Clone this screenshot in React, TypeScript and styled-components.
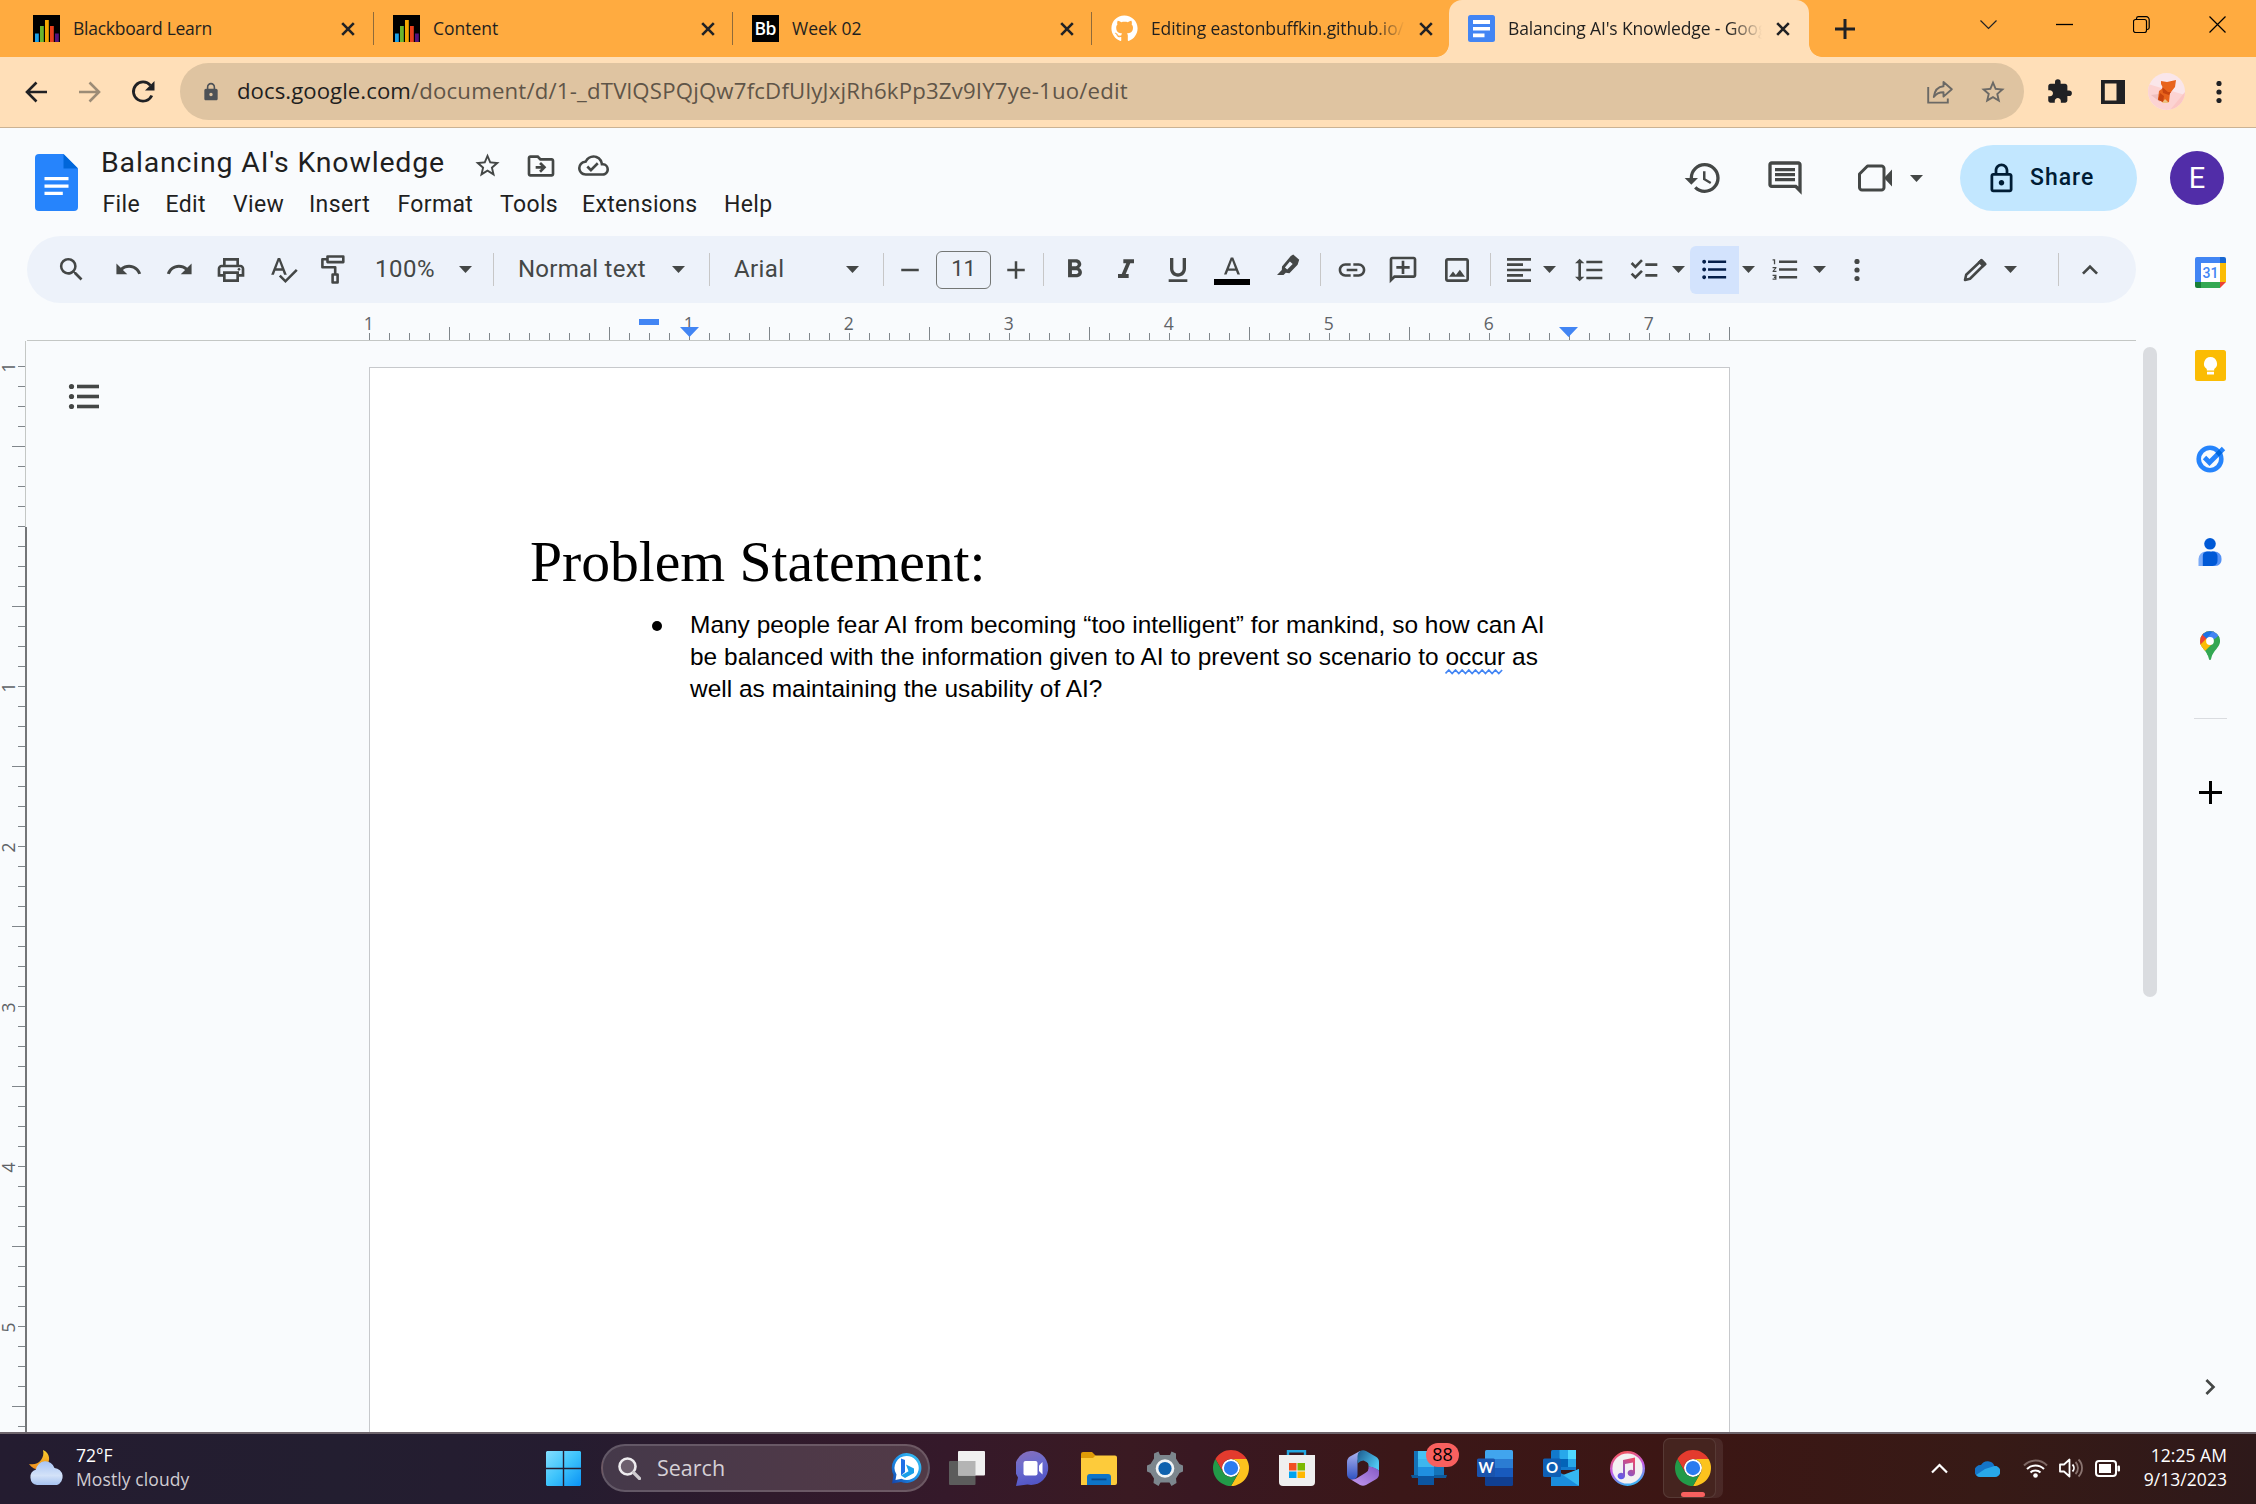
import React from 'react';
import styled, { createGlobalStyle, css } from 'styled-components';
import {
  MdAdd, MdChecklist, MdExtension, MdFormatAlignLeft, MdFormatBold, MdFormatItalic, MdFormatLineSpacing,
  MdFormatListBulleted, MdFormatListNumbered, MdFormatUnderlined, MdHistory, MdKeyboardArrowUp, MdLink, MdLock,
  MdOutlineAddComment, MdOutlineCloudDone, MdOutlineComment, MdOutlineDriveFileMove, MdOutlineImage,
  MdOutlineLock, MdOutlinePrint, MdRedo, MdRemove, MdSearch, MdSpellcheck, MdStarOutline, MdUndo, MdChevronRight,
} from 'react-icons/md';
import { FaGithub } from 'react-icons/fa';

const UI = '"Open Sans", "Noto Sans", sans-serif';
const GOOGLE = 'Roboto, "Open Sans", sans-serif';

const Global = createGlobalStyle`
  * { box-sizing: border-box; }
  html, body { margin: 0; padding: 0; }
  body { width: 2256px; height: 1504px; overflow: hidden; background: #f9fbfd; font-family: ${GOOGLE}; }
  svg { display: block; flex: none; }
`;

const Screen = styled.div`
  width: 2256px;
  height: 1504px;
  display: flex;
  flex-direction: column;
  overflow: hidden;
`;

const Text = styled.span<{ $size: number; $ls?: number; $font?: string; $color?: string; $ml?: number; $weight?: number }>`
  font-family: ${p => p.$font ?? GOOGLE};
  font-size: ${p => p.$size}px;
  font-weight: ${p => p.$weight ?? 400};
  letter-spacing: ${p => p.$ls ?? 0}px;
  color: ${p => p.$color ?? '#1f1f1f'};
  margin-left: ${p => p.$ml ?? 0}px;
  line-height: 1.2;
  white-space: pre;
`;

/* ---------- browser chrome ---------- */
const TabStrip = styled.div`
  height: 57px;
  flex: none;
  display: flex;
  align-items: stretch;
  padding-left: 14px;
  background: #ffab40;
`;

const Tab = styled.div<{ $w: number; $active?: boolean; $last?: boolean }>`
  position: relative;
  width: ${p => p.$w}px;
  display: flex;
  align-items: center;
  padding-left: 19px;
  ${p => !p.$active && !p.$last && css`
    &::after {
      content: '';
      position: absolute;
      right: 0;
      top: 12px;
      width: 1px;
      height: 33px;
      background: #8f6a3a;
    }
  `}
  ${p => p.$active && css`
    background: #ffdfb8;
    border-radius: 13px 13px 0 0;
    &::before, &::after {
      content: '';
      position: absolute;
      bottom: 0;
      width: 13px;
      height: 13px;
    }
    &::before { left: -13px; background: radial-gradient(circle at 0 0, #ffab40 12.5px, #ffdfb8 13.2px); }
    &::after { right: -13px; background: radial-gradient(circle at 100% 0, #ffab40 12.5px, #ffdfb8 13.2px); }
  `}
`;

const TabTitle = styled.div<{ $fade?: boolean }>`
  width: 254px;
  margin-left: 13px;
  padding: 4px 0;
  overflow: hidden;
  display: flex;
  ${p => p.$fade && css`mask-image: linear-gradient(90deg, #000 222px, transparent 254px);`}
`;

const TabClose = styled.div`
  margin-left: 14px;
`;

const NewTab = styled.div`
  margin-left: 26px;
  display: flex;
  align-items: center;
`;

const WindowControls = styled.div`
  margin-left: auto;
  margin-right: 30px;
  display: flex;
  align-items: center;
  gap: 59.5px;
  padding-bottom: 8px;
`;

const AddressRow = styled.div`
  height: 71px;
  flex: none;
  display: flex;
  align-items: center;
  padding: 0 26px 1px 25px;
  background: #ffdfb8;
  border-bottom: 1px solid #cbb293;
`;

const Omnibox = styled.div`
  width: 1844px;
  height: 57px;
  margin-left: 24px;
  border-radius: 29px;
  background: #dfc4a1;
  display: flex;
  align-items: center;
  padding: 0 17px 0 21px;
`;

const Gap = styled.div<{ $w: number }>`
  flex: none;
  width: ${p => p.$w}px;
`;

const Spacer = styled.div`
  flex: 1;
`;

/* ---------- document header ---------- */
const DocHeader = styled.header`
  height: 108px;
  flex: none;
  display: flex;
  align-items: flex-start;
  padding: 17px 32px 0 35px;
  background: #f9fbfd;
`;

const LogoBox = styled.div`
  width: 43px;
  height: 57px;
  margin-top: 9px;
`;

const TitleBlock = styled.div`
  margin-left: 23px;
  display: flex;
  flex-direction: column;
`;

const TitleRow = styled.div`
  height: 41px;
  display: flex;
  align-items: center;
  color: #444746;
`;

const DocTitle = styled.div`
  padding-bottom: 4px;
  display: flex;
`;

const MenuRow = styled.nav`
  height: 34px;
  margin-top: 2px;
  display: flex;
  align-items: center;
  padding-left: 1.500px;
`;

const MenuItem = styled.div<{ $w: number }>`
  width: ${p => p.$w}px;
  display: flex;
`;

const HeaderActions = styled.div`
  margin-left: auto;
  height: 66px;
  display: flex;
  align-items: center;
  color: #444746;
`;

const ShareButton = styled.div`
  width: 177px;
  height: 66px;
  border-radius: 33px;
  margin-left: 37px;
  padding-left: 25px;
  background: #c2e7ff;
  color: #001d35;
  display: flex;
  align-items: center;
`;

const Avatar = styled.div`
  width: 54px;
  height: 54px;
  margin-left: 33px;
  border-radius: 50%;
  background: #512da8;
  display: flex;
  align-items: center;
  justify-content: center;
`;

/* ---------- editor ---------- */
const Editor = styled.div`
  flex: 1;
  min-height: 0;
  display: flex;
  background: #f9fbfd;
`;

const EditorMain = styled.div`
  width: 2164px;
  display: flex;
  flex-direction: column;
`;

const Toolbar = styled.div`
  height: 67px;
  width: 2109px;
  flex: none;
  margin-left: 27px;
  border-radius: 33.5px;
  background: #edf2fa;
  display: flex;
  align-items: center;
  padding-left: 24px;
  color: #444746;
`;

const Tool = styled.div<{ $ml?: number; $w?: number; $on?: boolean; $lift?: number }>`
  flex: none;
  width: ${p => p.$w ?? 40}px;
  height: 48px;
  margin-left: ${p => p.$ml ?? 0}px;
  padding-bottom: ${p => p.$lift ?? 0}px;
  display: flex;
  align-items: center;
  justify-content: center;
  ${p => p.$on && css`background: #d3e3fd; color: #041e49; border-radius: 6px 0 0 6px;`}
`;

const ToolLabel = styled.div<{ $ml: number; $w: number }>`
  flex: none;
  width: ${p => p.$w}px;
  margin-left: ${p => p.$ml}px;
  display: flex;
`;

const Divider = styled.div<{ $ml: number }>`
  flex: none;
  width: 1px;
  height: 33px;
  margin-left: ${p => p.$ml}px;
  background: #c7c7c7;
`;

const SizeBox = styled.div`
  flex: none;
  width: 55px;
  height: 38px;
  margin-left: 6px;
  border: 1.5px solid #747775;
  border-radius: 6px;
  display: flex;
  align-items: center;
  justify-content: center;
`;

const ColorTool = styled.div`
  flex: none;
  width: 36px;
  margin-left: 16px;
  margin-right: 2px;
  height: 28px;
  margin-top: 3px;
  display: flex;
  flex-direction: column;
  align-items: center;
  justify-content: space-between;
  border-bottom: 6px solid #000;
`;

const Mirrored = styled.div`
  transform: scaleX(-1);
`;

const Workspace = styled.div`
  flex: 1;
  min-height: 0;
  display: flex;
  overflow: hidden;
`;

const OutlineColumn = styled.div`
  flex: none;
  width: 342px;
  padding: 38px 0 0 36px;
  color: #444746;
`;

const Page = styled.main`
  flex: none;
  width: 1361px;
  height: 1200px;
  margin-top: 26px;
  background: #fff;
  border: 1px solid #c7c9cc;
  padding: 161px 158px 0 160px;
  color: #000;
`;

const Heading = styled.h1`
  margin: 0;
  font: 400 57.7px/66px "Liberation Serif", "Times New Roman", serif;
  letter-spacing: -0.06px;
`;

const BulletList = styled.ul`
  list-style: none;
  margin: 14px 0 0;
  padding: 0 0 0 122px;
`;

const Bullet = styled.li`
  display: flex;
  font: 400 24.44px/32px "Liberation Sans", Arial, sans-serif;
  letter-spacing: 0.02px;
  &::before {
    content: '';
    flex: none;
    width: 10px;
    height: 10px;
    margin: 12px 28px 0 0;
    border-radius: 50%;
    background: #000;
  }
`;

const BulletText = styled.p`
  margin: 0;
`;

const Flagged = styled.span`
  position: relative;
  svg { position: absolute; left: 0; top: 26px; }
`;

const ScrollThumb = styled.div`
  width: 14px;
  height: 650px;
  margin: 6px 7px 0 auto;
  border-radius: 7px;
  background: #dadce0;
`;

const SidePanel = styled.aside`
  width: 92px;
  padding-top: 6px;
  display: flex;
  flex-direction: column;
  align-items: center;
`;

const SideItem = styled.div`
  flex: none;
  height: 60px;
  margin-bottom: 33.3px;
  display: flex;
  align-items: center;
  justify-content: center;
`;

const SideRule = styled.div`
  flex: none;
  width: 33px;
  height: 1px;
  margin: 10px 0 43px;
  background: #dadce0;
`;

const SideBottom = styled.div`
  margin-top: auto;
  margin-bottom: 29px;
  color: #444746;
`;

/* ---------- taskbar ---------- */
const TaskBar = styled.footer`
  flex: none;
  height: 72px;
  display: flex;
  align-items: center;
  padding: 0 29px 2px;
  border-top: 2px solid rgba(255, 255, 255, 0.2);
  background: linear-gradient(90deg, #241c30 0%, #231e30 15%, #251c30 25%, #2f1a2c 34%, #35192a 42%, #3a1a22 50%, #391822 53%, #3b1718 62%, #3c1614 74%, #371a16 88%, #2e191a 100%) padding-box, #4a3f48;
`;

const Weather = styled.div`
  width: 517px;
  display: flex;
  align-items: center;
`;

const TwoLines = styled.div<{ $right?: boolean }>`
  display: flex;
  flex-direction: column;
  gap: 3px;
  padding-bottom: 2px;
  align-items: ${p => (p.$right ? 'flex-end' : 'flex-start')};
`;

const SearchBox = styled.div`
  width: 329px;
  height: 48px;
  margin: 0 4px 0 20px;
  border-radius: 24px;
  border: 2px solid rgba(255, 255, 255, 0.16);
  background: linear-gradient(90deg, #45394a, #4e3948 60%, #513a47);
  display: flex;
  align-items: center;
  padding: 0 6px 0 15px;
`;

const TaskItem = styled.div`
  position: relative;
  flex: none;
  width: 66px;
  height: 60px;
  display: flex;
  align-items: center;
  justify-content: center;
`;

const TileBack = styled.div`
  position: absolute;
  left: 3px;
  top: 0;
  width: 60px;
  height: 60px;
  border-radius: 7px;
  background: rgba(255, 255, 255, 0.08);
`;

const Tile = styled.div`
  position: absolute;
  left: 3px;
  top: 0;
  width: 53px;
  height: 60px;
  border-radius: 7px;
  background: #45241f;
  border: 1.5px solid rgba(255, 255, 255, 0.1);
`;

const TileIcon = styled.div`
  position: relative;
`;

const RunMark = styled.div`
  position: absolute;
  left: 21px;
  bottom: 1px;
  width: 24px;
  height: 5px;
  border-radius: 3px;
  background: #f8605f;
`;

const CountBadge = styled.div`
  position: absolute;
  left: 30px;
  top: 5px;
  width: 33px;
  height: 24px;
  border-radius: 12px;
  background: #f8605f;
  display: flex;
  align-items: center;
  justify-content: center;
`;

const Tray = styled.div`
  margin-left: auto;
  display: flex;
  align-items: center;
`;

/* ---------- drawings ---------- */
const BlackboardIcon = () => (
  <svg width="27" height="27" viewBox="0 0 27 27">
    <rect width="27" height="27" fill="#000" />
    <rect x="2" y="18.5" width="3.8" height="8.5" fill="#1ba1e8" />
    <rect x="7" y="11" width="3.8" height="16" fill="#6cb52d" />
    <rect x="12" y="5" width="3.8" height="22" fill="#f5a800" />
    <rect x="17" y="11" width="3.8" height="16" fill="#e8401c" />
    <rect x="22" y="18.5" width="3.8" height="8.5" fill="#54127a" />
  </svg>
);

const BbIcon = () => (
  <svg width="27" height="27" viewBox="0 0 27 27">
    <rect width="27" height="27" fill="#000" />
    <text x="13.5" y="20" textAnchor="middle" fontFamily='"Open Sans", sans-serif' fontSize="17.5" fontWeight="600" fill="#fff" textLength="22">Bb</text>
  </svg>
);

const DocsTabIcon = () => (
  <svg width="27" height="27" viewBox="0 0 27 27">
    <rect width="27" height="27" rx="2.5" fill="#4285f4" />
    <path d="M5 5h17v4H5zM5 12h17v3.6H5zM5 18.6h11.5v3.6H5z" fill="#fff" />
  </svg>
);

const Cross = () => (
  <svg width="14" height="14" viewBox="0 0 14 14">
    <path d="M1.2 1.2l11.6 11.6M12.8 1.2L1.2 12.8" stroke="#202124" strokeWidth="2.6" />
  </svg>
);

const Caret = () => (
  <svg width="13" height="7" viewBox="0 0 13 7">
    <path d="M0 0h13L6.5 7z" fill="#444746" />
  </svg>
);

const DocsLogo = () => (
  <svg width="43" height="57" viewBox="0 0 43 57">
    <path d="M4 0h24.5L43 14.5V53a4 4 0 0 1-4 4H4a4 4 0 0 1-4-4V4a4 4 0 0 1 4-4z" fill="#2684fc" />
    <path d="M28.5 0L43 14.5H28.5z" fill="#0066da" />
    <path d="M9.5 23h24v3.2h-24zM9.5 30.5h24v3.2h-24zM9.5 37.8h18.3V41H9.5z" fill="#fff" />
  </svg>
);

const BackArrow = ({ color, flip }: { color: string; flip?: boolean }) => (
  <svg width="22" height="22" viewBox="0 0 22 22">
    <path d="M11.5 1.5L2 11l9.5 9.5M2 11h20" fill="none" stroke={color} strokeWidth="2.6" transform={flip ? 'matrix(-1 0 0 1 22 0)' : undefined} />
  </svg>
);

const Reload = () => (
  <svg width="24" height="24" viewBox="0 0 24 24">
    <path d="M20.8 15.5A9.6 9.6 0 1 1 19.4 5.4" fill="none" stroke="#202124" strokeWidth="2.8" />
    <path d="M23.5 1v9.5H14z" fill="#202124" />
  </svg>
);

const ShareArrow = () => (
  <svg width="26" height="26" viewBox="0 0 26 26" fill="none" stroke="#6b6965" strokeWidth="1.9">
    <path d="M1.2 8v15.6h19.6v-4" />
    <path d="M16.5 3l8.3 7.2-8.3 7.4v-4.4c-4.5 0-7.5 1.5-9.700 4.800 .8-6 4-10.200 9.700-10.700z" strokeLinejoin="round" />
  </svg>
);

const SideIcon = () => (
  <svg width="24" height="24" viewBox="0 0 24 24">
    <path d="M0 0h24v24H0zM3.800 3.500v17h11.700v-17z" fill="#202124" fillRule="evenodd" />
  </svg>
);

const ProfilePicture = () => (
  <svg width="37" height="37" viewBox="0 0 37 37">
    <defs><clipPath id="pf"><circle cx="18.5" cy="18.5" r="18.5" /></clipPath></defs>
    <g clipPath="url(#pf)">
      <rect width="37" height="37" fill="#fae6ea" />
      <path d="M0 11l37 11v15H0z" fill="#fcd3d2" />
      <path d="M37 19v18H22z" fill="#fbc6c4" />
      <path d="M3 22l8-1 1 8z" fill="#eebfbe" />
      <path d="M13 8l6 1 9-2-1 7-4 5-1 1-1 9-5 1-6-4 1-8 4-3-2-4z" fill="#e8631c" />
      <path d="M14 14l6 5 3 0-2 3-6-2zM10 27l2-7 4 3-1 6z" fill="#c8440f" />
      <path d="M14 30l3-4 4 4z" fill="#ecc283" />
    </g>
  </svg>
);

const Dots = ({ color = '#202124' }: { color?: string }) => (
  <svg width="6" height="22" viewBox="0 0 6 22" fill={color}>
    <circle cx="3" cy="2.5" r="2.6" /><circle cx="3" cy="11" r="2.6" /><circle cx="3" cy="19.5" r="2.6" />
  </svg>
);

const VideoIcon = () => (
  <svg width="34" height="28" viewBox="0 0 34 28">
    <path d="M9.5 2H23.5a2.5 2.5 0 0 1 2.5 2.5v19a2.5 2.5 0 0 1-2.5 2.5H4a2.5 2.5 0 0 1-2.5-2.5V10z" fill="none" stroke="#444746" strokeWidth="3" strokeLinejoin="round" />
    <path d="M26 14l8-8.5v17z" fill="#444746" />
  </svg>
);

const PaintRoller = () => (
  <svg width="24" height="29" viewBox="0 0 24 29" fill="none" stroke="#444746" strokeWidth="2.6">
    <path d="M6.5 1.5h15.800v5.600H6.500zM6.500 4.300H1.400v8h12.800v6.200M11.600 19.500h5v8h-5z" strokeLinejoin="round" />
  </svg>
);

const LetterA = () => (
  <svg width="16" height="18" viewBox="0 0 13 14">
    <path d="M5.5 0L0 14h2.100l1.200-3.200h6.400L10.900 14H13L7.500 0zM4 9l2.500-6.600L9 9z" fill="#444746" />
  </svg>
);

const Highlighter = () => (
  <svg width="23" height="21" viewBox="0 0 23 21">
    <path d="M16.200.5l6 5.300-1.600 5-8.200 8.400-3.600-.4L6.500 21H0l4.800-5 .2-3.600L13.800 2zM12.900 7.600l-5 6 2.300 2 5.500-5.500z" fill="#444746" fillRule="evenodd" />
  </svg>
);

const PencilIcon = () => (
  <svg width="25" height="24" viewBox="0 0 25 24">
    <path d="M2 22l1.200-5.200L18.600 2.200l3.600 3.600L7 20.700z" fill="none" stroke="#444746" strokeWidth="2.6" strokeLinejoin="round" />
    <path d="M18 1l5.600 5.400-3.400 3L14.700 4z" fill="#444746" />
  </svg>
);

const Squiggle = () => (
  <svg width="58" height="6" viewBox="0 0 58 6">
    <polyline
      points={Array.from({ length: 18 }, (_, i) => `${i * 3.33 + 0.5},${i % 2 ? 1 : 4.5}`).join(' ')}
      fill="none" stroke="#4285f4" strokeWidth="1.7"
    />
  </svg>
);

const OutlineIcon = () => (
  <svg width="36" height="30" viewBox="0 0 36 30" fill="#444746">
    {[7, 17, 27].map(y => (
      <g key={y}><circle cx="8.5" cy={y + 0.5} r="2.6" /><rect x="14" y={y - 1.3} width="22" height="3.6" /></g>
    ))}
  </svg>
);

const TopRuler = () => {
  const ticks = Array.from({ length: 69 }, (_, i) => i);
  return (
    <svg width="2164" height="38" viewBox="0 303 2164 38">
      <rect x="27" y="340" width="2109" height="1" fill="#c4c7c5" />
      {ticks.map(i => (
        <rect key={i} x={369 + i * 20} y={i % 8 === 4 || i === 68 ? 327 : 333} width="1" height={i % 8 === 4 || i === 68 ? 13 : 7} fill="#80868b" />
      ))}
      {[1, null, 1, 2, 3, 4, 5, 6, 7].map((n, i) => n && (
        <text key={i} x={368.8 + i * 160} y="330" textAnchor="middle" fontFamily='"Open Sans", sans-serif' fontSize="17.5" fill="#5f6368">{n}</text>
      ))}
      <rect x="639" y="319" width="20" height="6" fill="#4285f4" />
      <path d="M680 327h19l-9.5 10zM1559 327h19l-9.5 10z" fill="#4285f4" />
    </svg>
  );
};

const LeftRuler = () => (
  <svg width="27" height="1091" viewBox="0 341 27 1091">
    <rect x="25" y="341" width="1" height="186" fill="#c4c7c5" />
    <rect x="25" y="527" width="2" height="905" fill="#747678" />
    {Array.from({ length: 54 }, (_, i) => (
      <rect key={i} x={i % 8 === 4 ? 12 : 18} y={366 + i * 20} width={i % 8 === 4 ? 13 : 7} height="1" fill="#80868b" />
    ))}
    {[1, null, 1, 2, 3, 4, 5].map((n, i) => n && (
      <text key={i} transform={`translate(15 ${367.5 + i * 160}) rotate(-90)`} textAnchor="middle" fontFamily='"Open Sans", sans-serif' fontSize="17.5" fill="#5f6368">{n}</text>
    ))}
  </svg>
);

const CalendarIcon = () => (
  <svg width="31" height="31" viewBox="0 0 31 31">
    <rect x="6" y="6" width="19" height="19" fill="#fff" />
    <path d="M2 0h23v6H6v19H0V2a2 2 0 0 1 2-2z" fill="#4285f4" />
    <path d="M25 0h4a2 2 0 0 1 2 2v4h-6z" fill="#1967d2" />
    <path d="M25 6h6v19h-6z" fill="#fbbc04" />
    <path d="M6 25h19v6H6z" fill="#34a853" />
    <path d="M0 25h6v6H2a2 2 0 0 1-2-2z" fill="#188038" />
    <path d="M25 25h6l-6 6z" fill="#ea4335" />
    <text x="15.5" y="20.8" textAnchor="middle" fontFamily="Roboto, sans-serif" fontSize="14" fontWeight="500" fill="#4285f4">31</text>
  </svg>
);

const KeepIcon = () => (
  <svg width="31" height="31" viewBox="0 0 31 31">
    <rect width="31" height="31" rx="2.5" fill="#fbbc04" />
    <path d="M15.500 7a6.600 6.600 0 0 0-3.700 12v1.400h7.400V19a6.600 6.600 0 0 0-3.700-12zM12 21.700h7v2.900h-7z" fill="#fff" />
  </svg>
);

const TasksIcon = () => (
  <svg width="31" height="28" viewBox="0 0 31 28">
    <circle cx="15" cy="14" r="11.3" fill="none" stroke="#2684fc" strokeWidth="4.6" />
    <path d="M9.5 12.500l5 5L28.500 3.500" fill="none" stroke="#2684fc" strokeWidth="4.8" />
    <path d="M20.500 8l3.600-3.600 3.300 3.600-3.500 3.600z" fill="#0066da" />
  </svg>
);

const ContactsIcon = () => (
  <svg width="24" height="28" viewBox="0 0 24 28">
    <circle cx="12" cy="5.8" r="5.8" fill="#0059d6" />
    <path d="M8 13.500h4V28H.5v-7A7.500 7.500 0 0 1 8 13.500z" fill="#7baaf7" />
    <path d="M14 13.500h2.500a7 7 0 0 1 7 7v1a6 6 0 0 1-6 6.500H14z" fill="#5491f5" />
    <path d="M9 13.500h6a4.500 4.500 0 0 1 4.500 4.500v5a5 5 0 0 1-5 5H4.800v-10A4.500 4.500 0 0 1 9 13.500z" fill="#0059d6" />
  </svg>
);

const MapsIcon = () => (
  <svg width="20" height="29" viewBox="0 0 20 29">
    <defs><clipPath id="pin"><path d="M10 0a10 10 0 0 1 10 10c0 7-7 9-8.800 17.500-.5 2-1.900 2-2.400 0C7 19 0 17 0 10A10 10 0 0 1 10 0z" /></clipPath></defs>
    <g clipPath="url(#pin)">
      <rect width="20" height="29" fill="#34a853" />
      <path d="M0 19L16 0H0z" fill="#fbbc04" />
      <path d="M0 19l4 2L14 11 6 3 0 8z" fill="#fbbc04" />
      <path d="M-1 15l9-9-5-5h-4z" fill="#ea4335" />
      <path d="M2.200 3.500L7 8l8-8H4z" fill="#1a73e8" />
      <path d="M13 8l7-1V0h-7l-5 6z" fill="#4285f4" />
      <path d="M13.500 9.500L20 3v8L6 26z" fill="#34a853" />
    </g>
    <circle cx="10" cy="10" r="3.9" fill="#fff" />
  </svg>
);

const ChromeIcon = () => (
  <svg width="36" height="36" viewBox="0 0 48 48">
    <circle cx="24" cy="24" r="12" fill="#fff" />
    <path d="M24 12h20.780a24 24 0 0 0-41.560 0L13.610 30A12 12 0 0 1 24 12z" fill="#e33b2e" />
    <path d="M34.390 30L24 48a24 24 0 0 0 20.780-36H24a12 12 0 0 1 10.390 18z" fill="#fcc31e" />
    <path d="M13.610 30L3.220 12A24 24 0 0 0 24 48l10.390-18a12 12 0 0 1-20.780 0z" fill="#229a48" />
    <circle cx="24" cy="24" r="9.5" fill="#2a7bf0" />
  </svg>
);

const WeatherIcon = () => (
  <svg width="36" height="36" viewBox="0 0 36 36">
    <defs>
      <linearGradient id="cl" x1="0" y1="0" x2="0" y2="1"><stop offset="0" stopColor="#a9c5f5" /><stop offset="0.6" stopColor="#d3e2f8" /><stop offset="1" stopColor="#a6c2f0" /></linearGradient>
      <linearGradient id="mo" x1="0" y1="0" x2="0" y2="1"><stop offset="0" stopColor="#f8cf2e" /><stop offset="1" stopColor="#f08a1c" /></linearGradient>
    </defs>
    <path d="M14 0c7 3 8 11 3 16-4 5-12 5-17-2 5 1 9 0 12-4 2-3 3-6 2-10z" fill="url(#mo)" />
    <path d="M8 35a8 8 0 0 1-1-15.500A9.500 9.500 0 0 1 25.500 18 8.800 8.800 0 0 1 28 35z" fill="url(#cl)" />
  </svg>
);

const WindowsIcon = () => (
  <svg width="35" height="35" viewBox="0 0 35 35">
    <defs><linearGradient id="wi" x1="0" y1="0" x2="1" y2="1"><stop offset="0" stopColor="#84dfff" /><stop offset="0.5" stopColor="#3dc3fb" /><stop offset="1" stopColor="#0a92f5" /></linearGradient></defs>
    <path d="M1 0h15.800v16.800H0V1zM18.200 0H34l1 1v15.800H18.200zM0 18.200h16.800V35H1l-1-1zM18.200 18.200H35V34l-1 1H18.200z" fill="url(#wi)" />
  </svg>
);

const LoupeIcon = () => (
  <svg width="23" height="23" viewBox="0 0 23 23">
    <circle cx="9.5" cy="9.5" r="8" fill="#6c5f6d" stroke="#eeecef" strokeWidth="2.6" />
    <path d="M15.500 15.500l6 6" stroke="#cfcbd0" strokeWidth="3.2" strokeLinecap="round" />
  </svg>
);

const BingIcon = () => (
  <svg width="31" height="31" viewBox="0 0 31 31">
    <defs><linearGradient id="bi" x1="1" y1="0" x2="0" y2="1"><stop offset="0" stopColor="#3cc8f4" /><stop offset="0.55" stopColor="#1b8ee8" /><stop offset="1" stopColor="#1540a8" /></linearGradient></defs>
    <path d="M15.500 0a15 15 0 1 1-5.500 29L1 30.500 2.500 22A15 15 0 0 1 15.500 0z" fill="url(#bi)" />
    <path d="M15.500 3a12 12 0 1 1-5 22.800L4.500 27l1-5.500A12 12 0 0 1 15.500 3z" fill="#fff" />
    <path d="M10 5.500l4 1.500v12l-4 3.500z" fill="#1f6fe6" />
    <path d="M15 11.500l8 4v4.500L14 25l-4-2.500 7.500-4.300z" fill="#1a9fe8" />
  </svg>
);

const TaskViewIcon = () => (
  <svg width="36" height="34" viewBox="0 0 36 34">
    <rect y="10" width="26.5" height="24" rx="1" fill="#5c5c5c" />
    <rect x="9" width="27" height="24.5" rx="1" fill="#f0f0f0" />
    <rect x="9" y="10" width="17.5" height="14.5" fill="#b4b4b4" />
  </svg>
);

const ChatIcon = () => (
  <svg width="34" height="35" viewBox="0 0 34 35">
    <defs><linearGradient id="ch" x1="0" y1="0" x2="0.3" y2="1"><stop offset="0" stopColor="#8b70b8" /><stop offset="0.5" stopColor="#6a6bce" /><stop offset="1" stopColor="#5356c6" /></linearGradient></defs>
    <path d="M17 0a17 17 0 1 1-5.500 33.500L0 35l2-8.500A17 17 0 0 1 17 0z" fill="url(#ch)" />
    <rect x="7.5" y="10" width="14" height="14.5" rx="2" fill="#fff" />
    <path d="M23 14.500l3.500-3.500v12.500L23 20z" fill="#fff" />
  </svg>
);

const FolderIcon = () => (
  <svg width="36" height="33" viewBox="0 0 36 33">
    <path d="M0 2a2 2 0 0 1 2-2h9l4 4-3 4H0z" fill="#df9b07" />
    <path d="M0 6h12l2.500-2.500H34a2 2 0 0 1 2 2V31a2 2 0 0 1-2 2H0z" fill="#fdcb3b" />
    <path d="M6 33v-8a3 3 0 0 1 3-3h18a3 3 0 0 1 3 3v8z" fill="#0d74c8" />
    <rect x="10.5" y="26.5" width="15" height="1.8" fill="#0a4a8c" />
  </svg>
);

const SettingsIcon = () => (
  <svg width="36" height="35" viewBox="0 0 36 35">
    <path d="M13 4l-1.500-3.500L7 2.500v5L3.500 13 0 14.500v6l3.500 1.500 3.500 5.500-.5 4.500 5 3 2-3.500h9l2 3.500 5-3-.5-4.500 3.500-5.500 3.500-1.500v-6L32.500 13 29 7.500v-5L24.500.5 23 4z" fill="#7c868d" />
    <circle cx="18" cy="17.5" r="9.3" fill="#f2f4f5" />
    <circle cx="18" cy="17.5" r="6.6" fill="#0f62ae" />
  </svg>
);

const StoreIcon = () => (
  <svg width="36" height="36" viewBox="0 0 36 36">
    <path d="M9 7V1.200h17V7" fill="none" stroke="#22a7e0" strokeWidth="2.4" />
    <path d="M0 5h36v27a4 4 0 0 1-4 4H4a4 4 0 0 1-4-4z" fill="#efefef" />
    <path d="M10 13h7.500v7.500H10z" fill="#f15022" /><path d="M18.500 13H26v7.500h-7.500z" fill="#7db900" />
    <path d="M10 21.500h7.500V28H10z" fill="#00a3ee" /><path d="M18.500 21.500H26V28h-7.500z" fill="#ffb800" />
  </svg>
);

const M365Icon = () => (
  <svg width="32" height="36" viewBox="0 0 32 36">
    <defs>
      <linearGradient id="m1" x1="0" y1="0" x2="0" y2="1"><stop offset="0" stopColor="#b0b4f0" /><stop offset="1" stopColor="#2d50c0" /></linearGradient>
      <linearGradient id="m2" x1="0" y1="0" x2="1" y2="0.6"><stop offset="0" stopColor="#1c5a8e" /><stop offset="1" stopColor="#4fc8f2" /></linearGradient>
      <linearGradient id="m3" x1="0" y1="1" x2="1" y2="0"><stop offset="0" stopColor="#c59cf0" /><stop offset="1" stopColor="#8357c4" /></linearGradient>
    </defs>
    <path d="M13 1L3 6.500Q0 8.500 0 12v12q0 3.500 3 5l3 1q4-1.500 4.500-5V12Q10.500 8 14 5z" fill="url(#m1)" />
    <path d="M13 1q3-1.500 6 0l10 5.800q3 1.700 3 5.200v9q-3-3-10.500-4.500V15q0-2-2-3l-3-1.500q-3 0-6 3V6q0-3.500 2.500-5z" fill="url(#m2)" />
    <path d="M32 21v3q0 3.500-3 5.200L19 35q-3 1.500-6 0L3 29q4 1.500 8-1.500l8-5q2.500-1.500 2.500-4v-2Q29 17 32 21z" fill="url(#m3)" />
  </svg>
);

const PhoneIcon = () => (
  <svg width="36" height="36" viewBox="0 0 36 36">
    <path d="M3 1h30v24H3z" fill="#1473b8" /><path d="M0 25h36l-1 3H1z" fill="#0e5a9c" />
    <path d="M7 1h16v8H7z" fill="#46c3f3" /><path d="M7 9h16v8H7z" fill="#3db6ee" /><path d="M7 17h16v9H7z" fill="#1f8fe0" /><path d="M7 26h16v9H7z" fill="#0c55a0" />
  </svg>
);

const WordIcon = () => (
  <svg width="36" height="36" viewBox="0 0 36 36">
    <path d="M8 1.500Q8 0 9.500 0h25Q36 0 36 1.500V9H8z" fill="#41a5ee" /><path d="M8 9h28v9H8z" fill="#2b7cd3" />
    <path d="M8 18h28v9H8z" fill="#185abd" /><path d="M8 27h28v7.500q0 1.500-1.500 1.500h-25Q8 36 8 34.500z" fill="#103f91" />
    <rect y="8.5" width="18" height="18.5" rx="1.5" fill="#1a54ae" />
    <text x="9" y="23" textAnchor="middle" fontFamily="Lato, sans-serif" fontWeight="700" fontSize="14.5" fill="#fff">W</text>
  </svg>
);

const OutlookIcon = () => (
  <svg width="36" height="36" viewBox="0 0 36 36">
    <path d="M8 1.500Q8 0 9.500 0h22Q33 0 33 1.500V20H8z" fill="#1279cc" />
    <path d="M16.500 0h8.500v9h-8.500z" fill="#28a8ea" /><path d="M25 0h8v9h-8z" fill="#50d9ff" />
    <path d="M16.500 9H25v8h-8.500z" fill="#0364b8" /><path d="M25 9h8v8h-8z" fill="#28a8ea" />
    <path d="M8 36V19l14 6 14-6v15.500Q36 36 34.500 36z" fill="#1a8ddd" /><path d="M36 19v17L20 25z" fill="#35b8f1" />
    <rect y="8.5" width="18" height="18.5" rx="1.5" fill="#0f5fb4" />
    <text x="9" y="23" textAnchor="middle" fontFamily="Lato, sans-serif" fontWeight="700" fontSize="15" fill="#fff">O</text>
  </svg>
);

const MusicIcon = () => (
  <svg width="35" height="35" viewBox="0 0 35 35">
    <defs>
      <linearGradient id="mu" x1="0.3" y1="0" x2="0.6" y2="1"><stop offset="0" stopColor="#f2565f" /><stop offset="0.5" stopColor="#c05ee8" /><stop offset="1" stopColor="#3cb4f5" /></linearGradient>
      <linearGradient id="mn" x1="0.8" y1="0" x2="0.2" y2="1"><stop offset="0" stopColor="#ee4a6a" /><stop offset="1" stopColor="#5a5cf0" /></linearGradient>
    </defs>
    <circle cx="17.5" cy="17.5" r="16.3" fill="#f3f0f2" stroke="url(#mu)" strokeWidth="2.4" />
    <path d="M13 9l12-2.500V22a3.700 3.200 0 1 1-2-2.800v-7.700L15 13v12a3.700 3.200 0 1 1-2-2.800z" fill="url(#mn)" />
  </svg>
);

const CloudTray = () => (
  <svg width="25" height="17" viewBox="0 0 25 17">
    <path d="M6 5a7.500 7.500 0 0 1 13.500 1A5.500 5.500 0 0 1 20 17H5A5.500 5.500 0 0 1 6 5z" fill="#1474c8" />
    <path d="M10 9l9.500-3A5.500 5.500 0 0 1 20 17H5a6 6 0 0 1-4-2z" fill="#28a8ea" />
  </svg>
);

const WifiTray = () => (
  <svg width="25" height="20" viewBox="0 0 25 20" fill="none" strokeWidth="2">
    <path d="M1 7.500a16 16 0 0 1 23 0" stroke="#7d6763" />
    <path d="M4 11a12 12 0 0 1 17 0M7.500 14.500a7.200 7.200 0 0 1 10 0" stroke="#fff" />
    <circle cx="12.5" cy="17.5" r="2.3" fill="#fff" />
  </svg>
);

const VolumeTray = () => (
  <svg width="25" height="20" viewBox="0 0 25 20" fill="none" strokeWidth="1.8">
    <path d="M1 6.500h4L10.500 1.500v17L5 13.500H1z" stroke="#fff" strokeLinejoin="round" />
    <path d="M13.500 6.500a5 5 0 0 1 0 7" stroke="#fff" />
    <path d="M16.500 4a8.500 8.500 0 0 1 0 12M19.500 1.500a12 12 0 0 1 0 17" stroke="#8a7470" />
  </svg>
);

const BatteryTray = () => (
  <svg width="26" height="17" viewBox="0 0 26 17">
    <rect x="1" y="1" width="20" height="15" rx="3" fill="none" stroke="#fff" strokeWidth="2" />
    <rect x="4" y="4" width="12" height="9" fill="#fff" /><rect x="22.5" y="5.5" width="2.5" height="6" rx="1" fill="#fff" />
  </svg>
);

/* ---------- data ---------- */
const tabs = [
  { title: 'Blackboard Learn', icon: <BlackboardIcon />, w: 360, ls: -0.25 },
  { title: 'Content', icon: <BlackboardIcon />, w: 359, ls: 0 },
  { title: 'Week 02', icon: <BbIcon />, w: 359, ls: 0 },
  { title: 'Editing eastonbuffkin.github.io/', icon: <FaGithub size={27} color="#fff" />, w: 357, ls: -0.1, fade: true, last: true },
  { title: "Balancing AI's Knowledge - Google", icon: <DocsTabIcon />, w: 360, ls: -0.15, fade: true, active: true },
];

const menus: [string, number][] = [
  ['File', 63], ['Edit', 67.5], ['View', 76], ['Insert', 88.5], ['Format', 102.5], ['Tools', 82], ['Extensions', 142], ['Help', 60],
];

const taskIcons = [TaskViewIcon, ChatIcon, FolderIcon, SettingsIcon, ChromeIcon, StoreIcon, M365Icon, PhoneIcon, WordIcon, OutlookIcon, MusicIcon];

export default function App() {
  return (
    <Screen>
      <Global />
      <TabStrip>
        {tabs.map(t => (
          <Tab key={t.title} $w={t.w} $active={t.active} $last={t.last}>
            {t.icon}
            <TabTitle $fade={t.fade}><Text $size={17.5} $ls={t.ls} $font={UI}>{t.title}</Text></TabTitle>
            <TabClose><Cross /></TabClose>
          </Tab>
        ))}
        <NewTab>
          <svg width="20" height="20" viewBox="0 0 20 20"><path d="M10 0v20M0 10h20" stroke="#202124" strokeWidth="3" /></svg>
        </NewTab>
        <WindowControls>
          <svg width="17" height="17" viewBox="0 0 17 17"><path d="M.5 4.500l8 8 8-8" fill="none" stroke="#202124" strokeWidth="1.2" /></svg>
          <svg width="17" height="17" viewBox="0 0 17 17"><path d="M0 8.500h17" stroke="#000" strokeWidth="1.3" /></svg>
          <svg width="17" height="17" viewBox="0 0 17 17"><path d="M3.500 3.500V2.500a2 2 0 0 1 2-1.800h7.700a3 3 0 0 1 3 3v7.800a2 2 0 0 1-1.800 2h-1M2.500 3.500h9a2 2 0 0 1 2 2v9a2 2 0 0 1-2 2h-9a2 2 0 0 1-2-2v-9a2 2 0 0 1 2-2z" fill="none" stroke="#000" strokeWidth="1.2" /></svg>
          <svg width="17" height="17" viewBox="0 0 17 17"><path d="M.5.5l16 16M16.500.5l-16 16" stroke="#000" strokeWidth="1.2" /></svg>
        </WindowControls>
      </TabStrip>

      <AddressRow>
        <BackArrow color="#202124" />
        <Gap $w={32} />
        <BackArrow color="#9c8c76" flip />
        <Gap $w={30} />
        <Reload />
        <Gap $w={1} />
        <Omnibox>
          <MdLock size={20} color="#4d5156" />
          <Text $size={22.2} $ls={0.05} $font={UI} $ml={16}>docs.google.com</Text>
          <Text $size={22.2} $ls={0.19} $font={UI} $color="#5f5548">/document/d/1-_dTVlQSPQjQw7fcDfUlyJxjRh6kPp3Zv9IY7ye-1uo/edit</Text>
          <Spacer />
          <ShareArrow />
          <Gap $w={26} />
          <MdStarOutline size={28} color="#6b6965" />
        </Omnibox>
        <Gap $w={22} />
        <MdExtension size={27} color="#202124" />
        <Gap $w={28} />
        <SideIcon />
        <Gap $w={23} />
        <ProfilePicture />
        <Spacer />
        <Dots />
        <Gap $w={8} />
      </AddressRow>

      <DocHeader>
        <LogoBox><DocsLogo /></LogoBox>
        <TitleBlock>
          <TitleRow>
            <DocTitle><Text $size={28.5} $ls={0.82}>Balancing AI's Knowledge</Text></DocTitle>
            <Gap $w={28} />
            <MdStarOutline size={29} />
            <Gap $w={23} />
            <MdOutlineDriveFileMove size={32} />
            <Gap $w={21} />
            <MdOutlineCloudDone size={31} />
          </TitleRow>
          <MenuRow>
            {menus.map(([label, w]) => (
              <MenuItem key={label} $w={w}><Text $size={23} $ls={0.35}>{label}</Text></MenuItem>
            ))}
          </MenuRow>
        </TitleBlock>
        <HeaderActions>
          <MdHistory size={40} />
          <Gap $w={42} />
          <MdOutlineComment size={40} />
          <Gap $w={53} />
          <VideoIcon />
          <Gap $w={18} />
          <Caret />
          <ShareButton>
            <MdOutlineLock size={33} />
            <Text $size={23} $ls={1} $weight={500} $color="#001d35" $ml={12}>Share</Text>
          </ShareButton>
          <Avatar><Text $size={29} $color="#fff">E</Text></Avatar>
        </HeaderActions>
      </DocHeader>

      <Editor>
        <EditorMain>
          <Toolbar>
            <Tool><MdSearch size={31} /></Tool>
            <Tool $ml={17}><MdUndo size={29} /></Tool>
            <Tool $ml={11}><MdRedo size={29} /></Tool>
            <Tool $ml={12}><MdOutlinePrint size={32} /></Tool>
            <Tool $ml={12}><MdSpellcheck size={31} /></Tool>
            <Tool $ml={10}><PaintRoller /></Tool>
            <ToolLabel $ml={22} $w={61}><Text $size={24} $ls={0.5} $color="#444746">100%</Text></ToolLabel>
            <Tool $ml={13} $w={32}><Caret /></Tool>
            <Divider $ml={12} />
            <ToolLabel $ml={24} $w={128}><Text $size={24} $ls={0.25} $color="#444746">Normal text</Text></ToolLabel>
            <Tool $ml={16} $w={32}><Caret /></Tool>
            <Divider $ml={15} />
            <ToolLabel $ml={24} $w={50}><Text $size={24} $ls={0.4} $color="#444746">Arial</Text></ToolLabel>
            <Tool $ml={52} $w={32}><Caret /></Tool>
            <Divider $ml={15} />
            <Tool $ml={6}><MdRemove size={30} /></Tool>
            <SizeBox><Text $size={22} $color="#444746">11</Text></SizeBox>
            <Tool $ml={5}><MdAdd size={30} /></Tool>
            <Divider $ml={7} />
            <Tool $ml={10}><MdFormatBold size={31} /></Tool>
            <Tool $ml={12}><MdFormatItalic size={32} /></Tool>
            <Tool $ml={12}><MdFormatUnderlined size={32} /></Tool>
            <ColorTool><LetterA /></ColorTool>
            <Tool $ml={16} $lift={11}><Highlighter /></Tool>
            <Divider $ml={12} />
            <Tool $ml={11}><MdLink size={32} /></Tool>
            <Tool $ml={11}><Mirrored><MdOutlineAddComment size={32} /></Mirrored></Tool>
            <Tool $ml={14}><MdOutlineImage size={32} /></Tool>
            <Divider $ml={13} />
            <Tool $ml={8}><MdFormatAlignLeft size={32} /></Tool>
            <Tool $w={20}><Caret /></Tool>
            <Tool $ml={10}><MdFormatLineSpacing size={32} /></Tool>
            <Tool $ml={15}><MdChecklist size={32} /></Tool>
            <Tool $ml={4} $w={20}><Caret /></Tool>
            <Tool $ml={2} $w={49} $on><MdFormatListBulleted size={31} /></Tool>
            <Tool $w={18}><Caret /></Tool>
            <Tool $ml={8}><MdFormatListNumbered size={31} /></Tool>
            <Tool $ml={4} $w={20}><Caret /></Tool>
            <Tool $ml={8}><Dots color="#444746" /></Tool>
            <Tool $ml={78}><PencilIcon /></Tool>
            <Tool $ml={5} $w={20}><Caret /></Tool>
            <Divider $ml={38} />
            <Tool $ml={11}><MdKeyboardArrowUp size={32} /></Tool>
          </Toolbar>
          <TopRuler />
          <Workspace>
            <LeftRuler />
            <OutlineColumn><OutlineIcon /></OutlineColumn>
            <Page>
              <Heading>Problem Statement:</Heading>
              <BulletList>
                <Bullet>
                  <BulletText>
                    Many people fear AI from becoming “too intelligent” for mankind, so how can AI be balanced with the
                    information given to AI to prevent so scenario to <Flagged>occur<Squiggle /></Flagged> as well as
                    maintaining the usability of AI?
                  </BulletText>
                </Bullet>
              </BulletList>
            </Page>
            <ScrollThumb />
          </Workspace>
        </EditorMain>
        <SidePanel>
          <SideItem><CalendarIcon /></SideItem>
          <SideItem><KeepIcon /></SideItem>
          <SideItem><TasksIcon /></SideItem>
          <SideItem><ContactsIcon /></SideItem>
          <SideItem><MapsIcon /></SideItem>
          <SideRule />
          <SideItem>
            <svg width="23" height="23" viewBox="0 0 23 23"><path d="M11.500 0v23M0 11.500h23" stroke="#000" strokeWidth="3" /></svg>
          </SideItem>
          <SideBottom><MdChevronRight size={32} /></SideBottom>
        </SidePanel>
      </Editor>

      <TaskBar>
        <Weather>
          <WeatherIcon />
          <Gap $w={11} />
          <TwoLines>
            <Text $size={17.5} $font={UI} $color="#fff">72°F</Text>
            <Text $size={17.5} $ls={0.1} $font={UI} $color="#d0ccd2">Mostly cloudy</Text>
          </TwoLines>
        </Weather>
        <WindowsIcon />
        <SearchBox>
          <LoupeIcon />
          <Text $size={21.5} $font={UI} $color="#d5d0d6" $ml={16}>Search</Text>
          <Spacer />
          <BingIcon />
        </SearchBox>
        {taskIcons.map((Icon, i) => (
          <TaskItem key={i}>
            <Icon />
            {Icon === PhoneIcon && <CountBadge><Text $size={18} $font={UI} $color="#000">88</Text></CountBadge>}
          </TaskItem>
        ))}
        <TaskItem>
          <TileBack />
          <Tile />
          <TileIcon><ChromeIcon /></TileIcon>
          <RunMark />
        </TaskItem>
        <Tray>
          <svg width="17" height="11" viewBox="0 0 17 11"><path d="M1 9.500l7.500-7.500 7.500 7.500" fill="none" stroke="#fff" strokeWidth="2.2" /></svg>
          <Gap $w={27} />
          <CloudTray />
          <Gap $w={23} />
          <WifiTray />
          <Gap $w={11} />
          <VolumeTray />
          <Gap $w={11} />
          <BatteryTray />
          <Gap $w={23} />
          <TwoLines $right>
            <Text $size={17.5} $ls={0.05} $font={UI} $color="#fff">12:25 AM</Text>
            <Text $size={17.5} $ls={0.05} $font={UI} $color="#fff">9/13/2023</Text>
          </TwoLines>
        </Tray>
      </TaskBar>
    </Screen>
  );
}
